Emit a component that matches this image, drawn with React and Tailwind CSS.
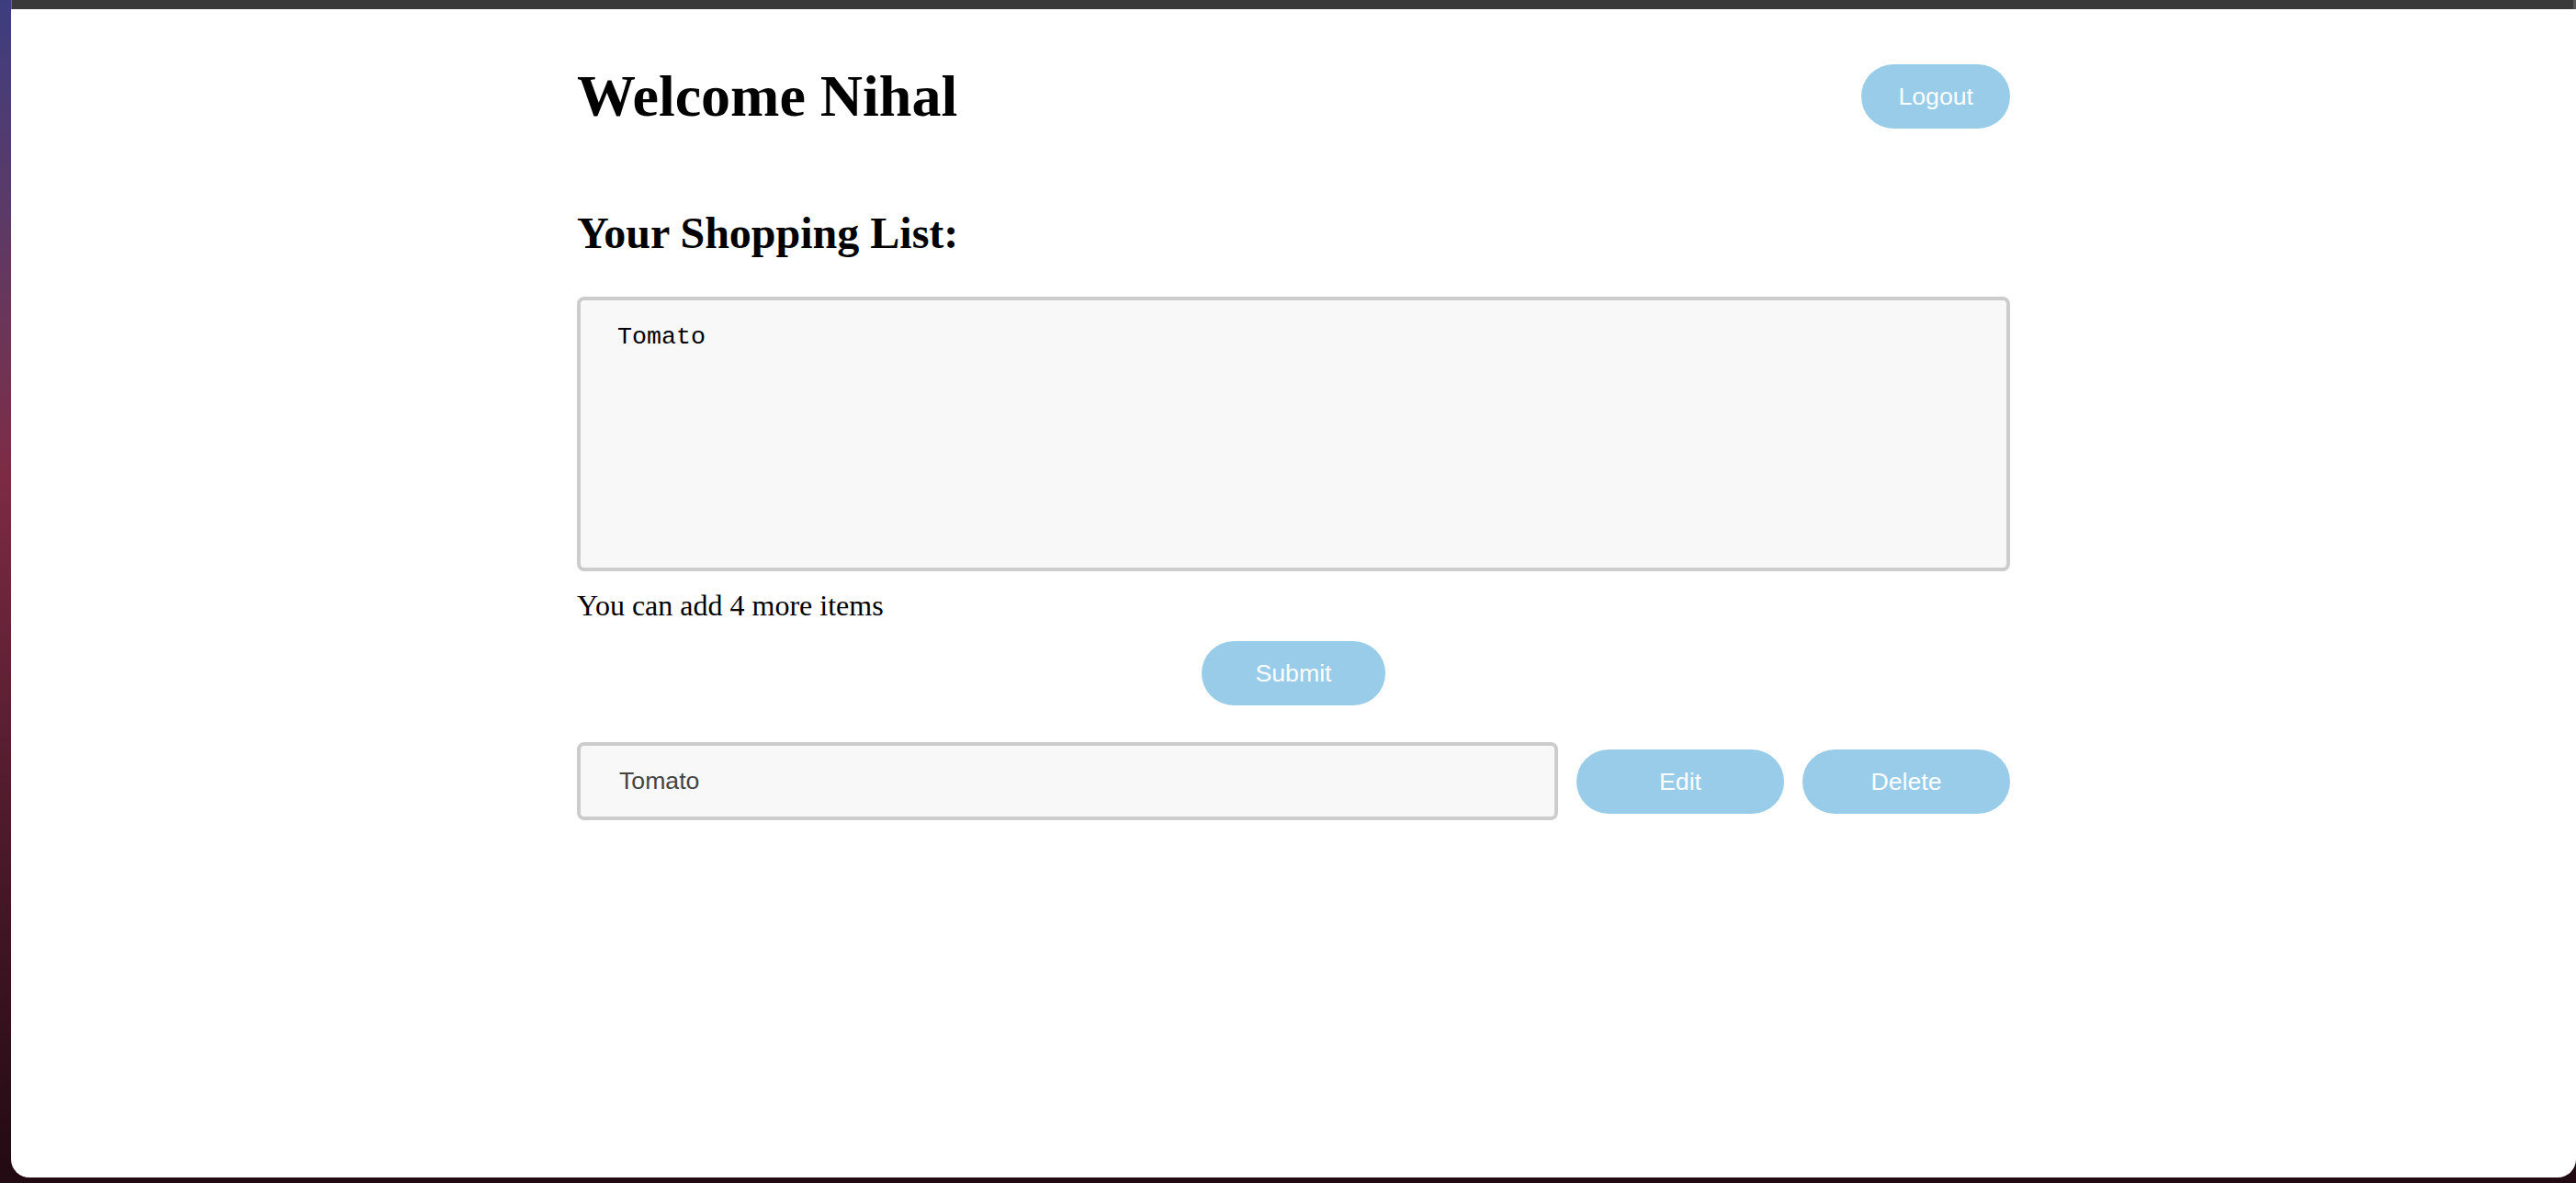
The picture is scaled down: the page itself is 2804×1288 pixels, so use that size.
import React from "react";

export default function App() {
  return (
    <div className="w-full h-[1288px] flex flex-col pl-[12px] pb-[6px] bg-linear-to-b from-[#3c3d80] via-[#7d2b45] via-40% to-[#220a12] overflow-hidden">
      <div className="h-[10px] shrink-0 bg-[#3a3a3a] border-l border-r-[3px] border-l-[#6a6a6a] border-r-[#5a5a5a]" />
      <div className="flex-1 bg-white rounded-b-[20px]">
        <div className="w-[1560px] mx-auto pt-[60px]">
          <div className="flex items-center justify-between h-[70px]">
            <h1 className="text-[64px] leading-[70px] font-bold text-black font-['Liberation_Serif',_'Times_New_Roman',_serif]">
              Welcome Nihal
            </h1>
            <button className="h-[70px] px-[40px] rounded-full bg-[#98cce8] text-white text-[26.67px] leading-[30px] font-['Liberation_Sans',_Arial,_sans-serif]">
              Logout
            </button>
          </div>

          <h2 className="mt-[87px] text-[48px] leading-[53px] font-bold text-black font-['Liberation_Serif',_'Times_New_Roman',_serif]">
            Your Shopping List:
          </h2>

          <textarea
            className="block mt-[43px] w-full h-[299px] resize-none border-4 border-[#cccccc] rounded-[8px] bg-[#f8f8f8] pl-[40px] pr-[40px] pt-[25px] pb-[24px] text-[26.67px] leading-[30px] text-black outline-none font-['Liberation_Mono',_'Courier_New',_monospace]"
            defaultValue="Tomato"
          />

          <p className="mt-[19px] text-[32px] leading-[36px] text-black font-['Liberation_Serif',_'Times_New_Roman',_serif]">
            You can add 4 more items
          </p>

          <div className="mt-[21px] flex justify-center">
            <button className="w-[200px] h-[70px] rounded-full bg-[#98cce8] text-white text-[26.67px] leading-[30px] font-['Liberation_Sans',_Arial,_sans-serif]">
              Submit
            </button>
          </div>

          <div className="mt-[40px] flex items-center gap-[20px]">
            <input
              className="flex-1 min-w-0 h-[85px] border-4 border-[#cccccc] rounded-[8px] bg-[#f8f8f8] pl-[42px] text-[26.67px] text-[#444444] outline-none font-['Liberation_Sans',_Arial,_sans-serif]"
              defaultValue="Tomato"
              readOnly
            />
            <button className="w-[226px] h-[70px] shrink-0 rounded-full bg-[#98cce8] text-white text-[26.67px] leading-[30px] font-['Liberation_Sans',_Arial,_sans-serif]">
              Edit
            </button>
            <button className="w-[226px] h-[70px] shrink-0 rounded-full bg-[#98cce8] text-white text-[26.67px] leading-[30px] font-['Liberation_Sans',_Arial,_sans-serif]">
              Delete
            </button>
          </div>
        </div>
      </div>
    </div>
  );
}
